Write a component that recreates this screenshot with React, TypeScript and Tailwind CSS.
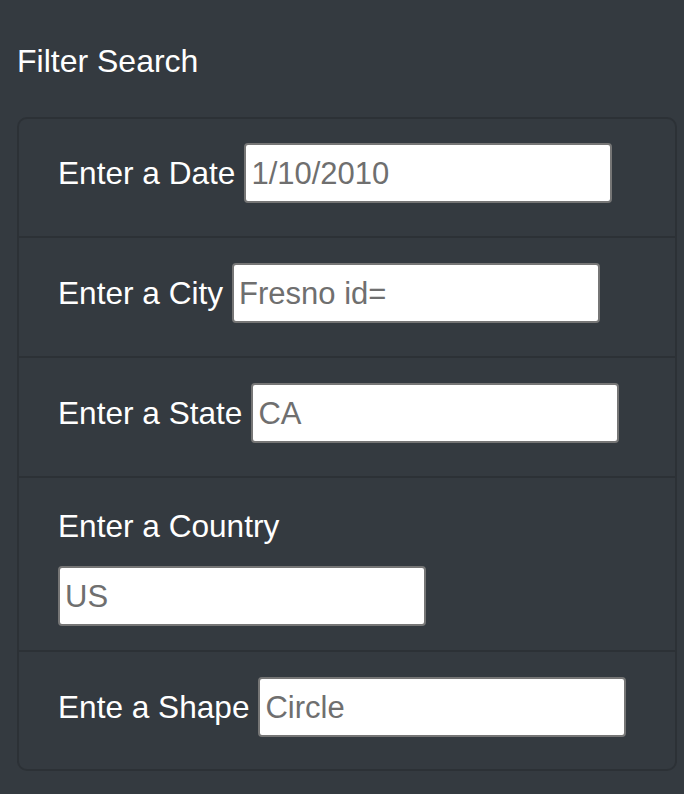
import { useState } from 'react'

type Field = { label: string; value: string; stacked?: boolean; h: string }

const fields: Field[] = [
  { label: 'Enter a Date', value: '1/10/2010', h: 'h-[119px]' },
  { label: 'Enter a City', value: 'Fresno id=', h: 'h-[120px] pt-[25px]' },
  { label: 'Enter a State', value: 'CA', h: 'h-[120px] pt-[25px]' },
  { label: 'Enter a Country', value: 'US', stacked: true, h: '' },
  { label: 'Ente a Shape', value: 'Circle', h: 'h-[117px] pt-[25px]' },
]

const inputClass =
  'box-border h-[60px] w-[368px] shrink-0 rounded-[4px] border-2 border-[#767676] bg-white px-[5px] pt-[2px] text-[31px] text-[#6f6f6f] outline-none'

export default function App() {
  const [values, setValues] = useState(fields.map((f) => f.value))

  return (
    <main
      className="min-h-screen bg-[#343a40] pl-[17px] pr-[7px] pt-[37px] pb-[23px] text-white"
      style={{ fontFamily: '"Liberation Sans", Arial, sans-serif' }}
    >
      <h2 className="mb-[32px] text-[32px] leading-[48px] font-normal">Filter Search</h2>

      <ul className="rounded-[10px] border-2 border-[#2c3136]">
        {fields.map((f, i) => {
          const last = i === fields.length - 1
          const border = last ? '' : 'border-b-2 border-[#2c3136]'
          const input = (
            <input
              className={inputClass}
              value={values[i]}
              onChange={(e) => setValues(values.map((v, j) => (j === i ? e.target.value : v)))}
            />
          )
          if (f.stacked) {
            return (
              <li key={f.label} className={`${border} px-[39px] pt-[24px] pb-[24px]`}>
                <label className="mb-[16px] block text-[31.6px] leading-[48px]">{f.label}</label>
                {input}
              </li>
            )
          }
          return (
            <li key={f.label} className={`${border} px-[39px] pt-[24px] ${f.h}`}>
              <div className="flex items-center gap-[9px]">
                <label className="text-[31.6px] leading-[48px] whitespace-nowrap">{f.label}</label>
                {input}
              </div>
            </li>
          )
        })}
      </ul>
    </main>
  )
}
